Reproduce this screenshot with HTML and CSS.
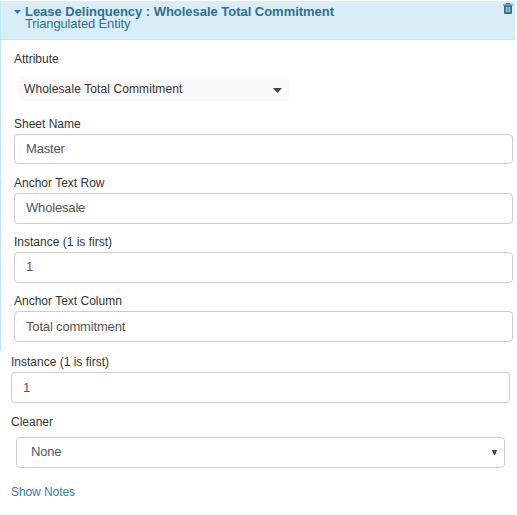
FILE: index.html
```
<!DOCTYPE html>
<html lang="en">
<head>
<meta charset="utf-8">
<title>Lease Delinquency</title>
<link rel="stylesheet" href="styles.css">
</head>
<body>
<section class="panel">
  <header class="panel-head">
    <svg class="caret" viewBox="0 0 7 4" width="7" height="4" aria-hidden="true"><path d="M0 0h7L3.5 4z" fill="#337ab7"/></svg>
    <div class="heading">
      <h1 class="title">Lease Delinquency : Wholesale Total Commitment</h1>
      <p class="subtitle">Triangulated Entity</p>
    </div>
    <svg class="trash" viewBox="0 0 10 11" width="10" height="11" aria-hidden="true">
      <path d="M3 1.5V.5h4v1M0 2h10" fill="none" stroke="#31708f" stroke-width="1"/>
      <path d="M1 2.5h8V10q0 1-1 1H2q-1 0-1-1z" fill="#31708f"/>
      <path d="M3.3 4v5.3M5 4v5.3M6.7 4v5.3" stroke="#d9edf7" stroke-width=".8"/>
    </svg>
  </header>
  <div class="panel-body">
    <div class="label attribute-label">Attribute</div>
    <div class="picker"><span>Wholesale Total Commitment</span><svg class="picker-caret" viewBox="0 0 9 5" width="9" height="5" aria-hidden="true"><path d="M0 0h9L4.5 5z" fill="#444"/></svg></div>
    <div class="label sheet-label">Sheet Name</div>
    <div class="input short">Master</div>
    <div class="label">Anchor Text Row</div>
    <div class="input">Wholesale</div>
    <div class="label">Instance (1 is first)</div>
    <div class="input">1</div>
    <div class="label">Anchor Text Column</div>
    <div class="input low">Total commitment</div>
  </div>
</section>
<section class="extra">
  <div class="label">Instance (1 is first)</div>
  <div class="input low">1</div>
  <div class="label cleaner-label">Cleaner</div>
  <div class="input select"><span>None</span><svg width="5" height="5" viewBox="0 0 5 5" aria-hidden="true"><path d="M0 0h5L3.2 5H1.8z" fill="#444"/></svg></div>
  <a class="notes">Show Notes</a>
</section>
</body>
</html>
```

FILE: styles.css
```
* { box-sizing: border-box; }
body {
  margin: 0;
  background: #fff;
  color: #333;
  font: 12px/14px "Liberation Sans", Arial, sans-serif;
}
.panel {
  width: 515px;
  height: 350px;
  margin-top: 1px;
  border-left: 1px solid #bce8f1;
}
.panel-head {
  display: flex;
  align-items: flex-start;
  height: 39px;
  padding: 2px 2px 0 13px;
  background: #d9edf7;
  border-bottom: 1px solid #bce8f1;
  color: #31708f;
}
.caret { margin: 7px 4px 0 0; }
.heading {
  flex: 1;
  padding-top: 3px;
}
.title {
  margin: 0;
  font-size: 13px;
  line-height: 12px;
  letter-spacing: -0.03px;
}
.subtitle {
  margin: 0;
  font-size: 13px;
  line-height: 12px;
  letter-spacing: -0.14px;
}
.panel-body { padding: 12px 2px 0 13px; }
.label { height: 14px; }
.picker {
  display: flex;
  justify-content: space-between;
  align-items: center;
  width: 270px;
  height: 25px;
  margin: 10px 0 0 5px;
  padding: 1px 7px 0 5px;
  background: #fafafa;
  letter-spacing: 0.1px;
}
.picker-caret { margin-top: 2px; }
.sheet-label { margin: 16px 0 3px; }
.input {
  height: 31px;
  padding-left: 11px;
  border: 1px solid #ccc;
  border-radius: 4px;
  color: #555;
  font-size: 13px;
  line-height: 28px;
  letter-spacing: -0.17px;
}
.short { height: 30px; }
.low { line-height: 30px; }
.panel-body .input + .label { margin: 11px 0 3px; }
.panel-body .short + .label { margin-top: 12px; }
.extra { padding: 4px 7px 0 11px; }
.extra .label { margin: 0 0 3px; }
.extra .cleaner-label { margin: 12px 0 8px; }
.select {
  display: flex;
  justify-content: space-between;
  align-items: center;
  margin: 0 5px;
  padding: 0 7px 1px 14px;
}
.notes {
  display: block;
  margin-top: 17px;
  color: #337ab7;
  letter-spacing: -0.08px;
}
```
